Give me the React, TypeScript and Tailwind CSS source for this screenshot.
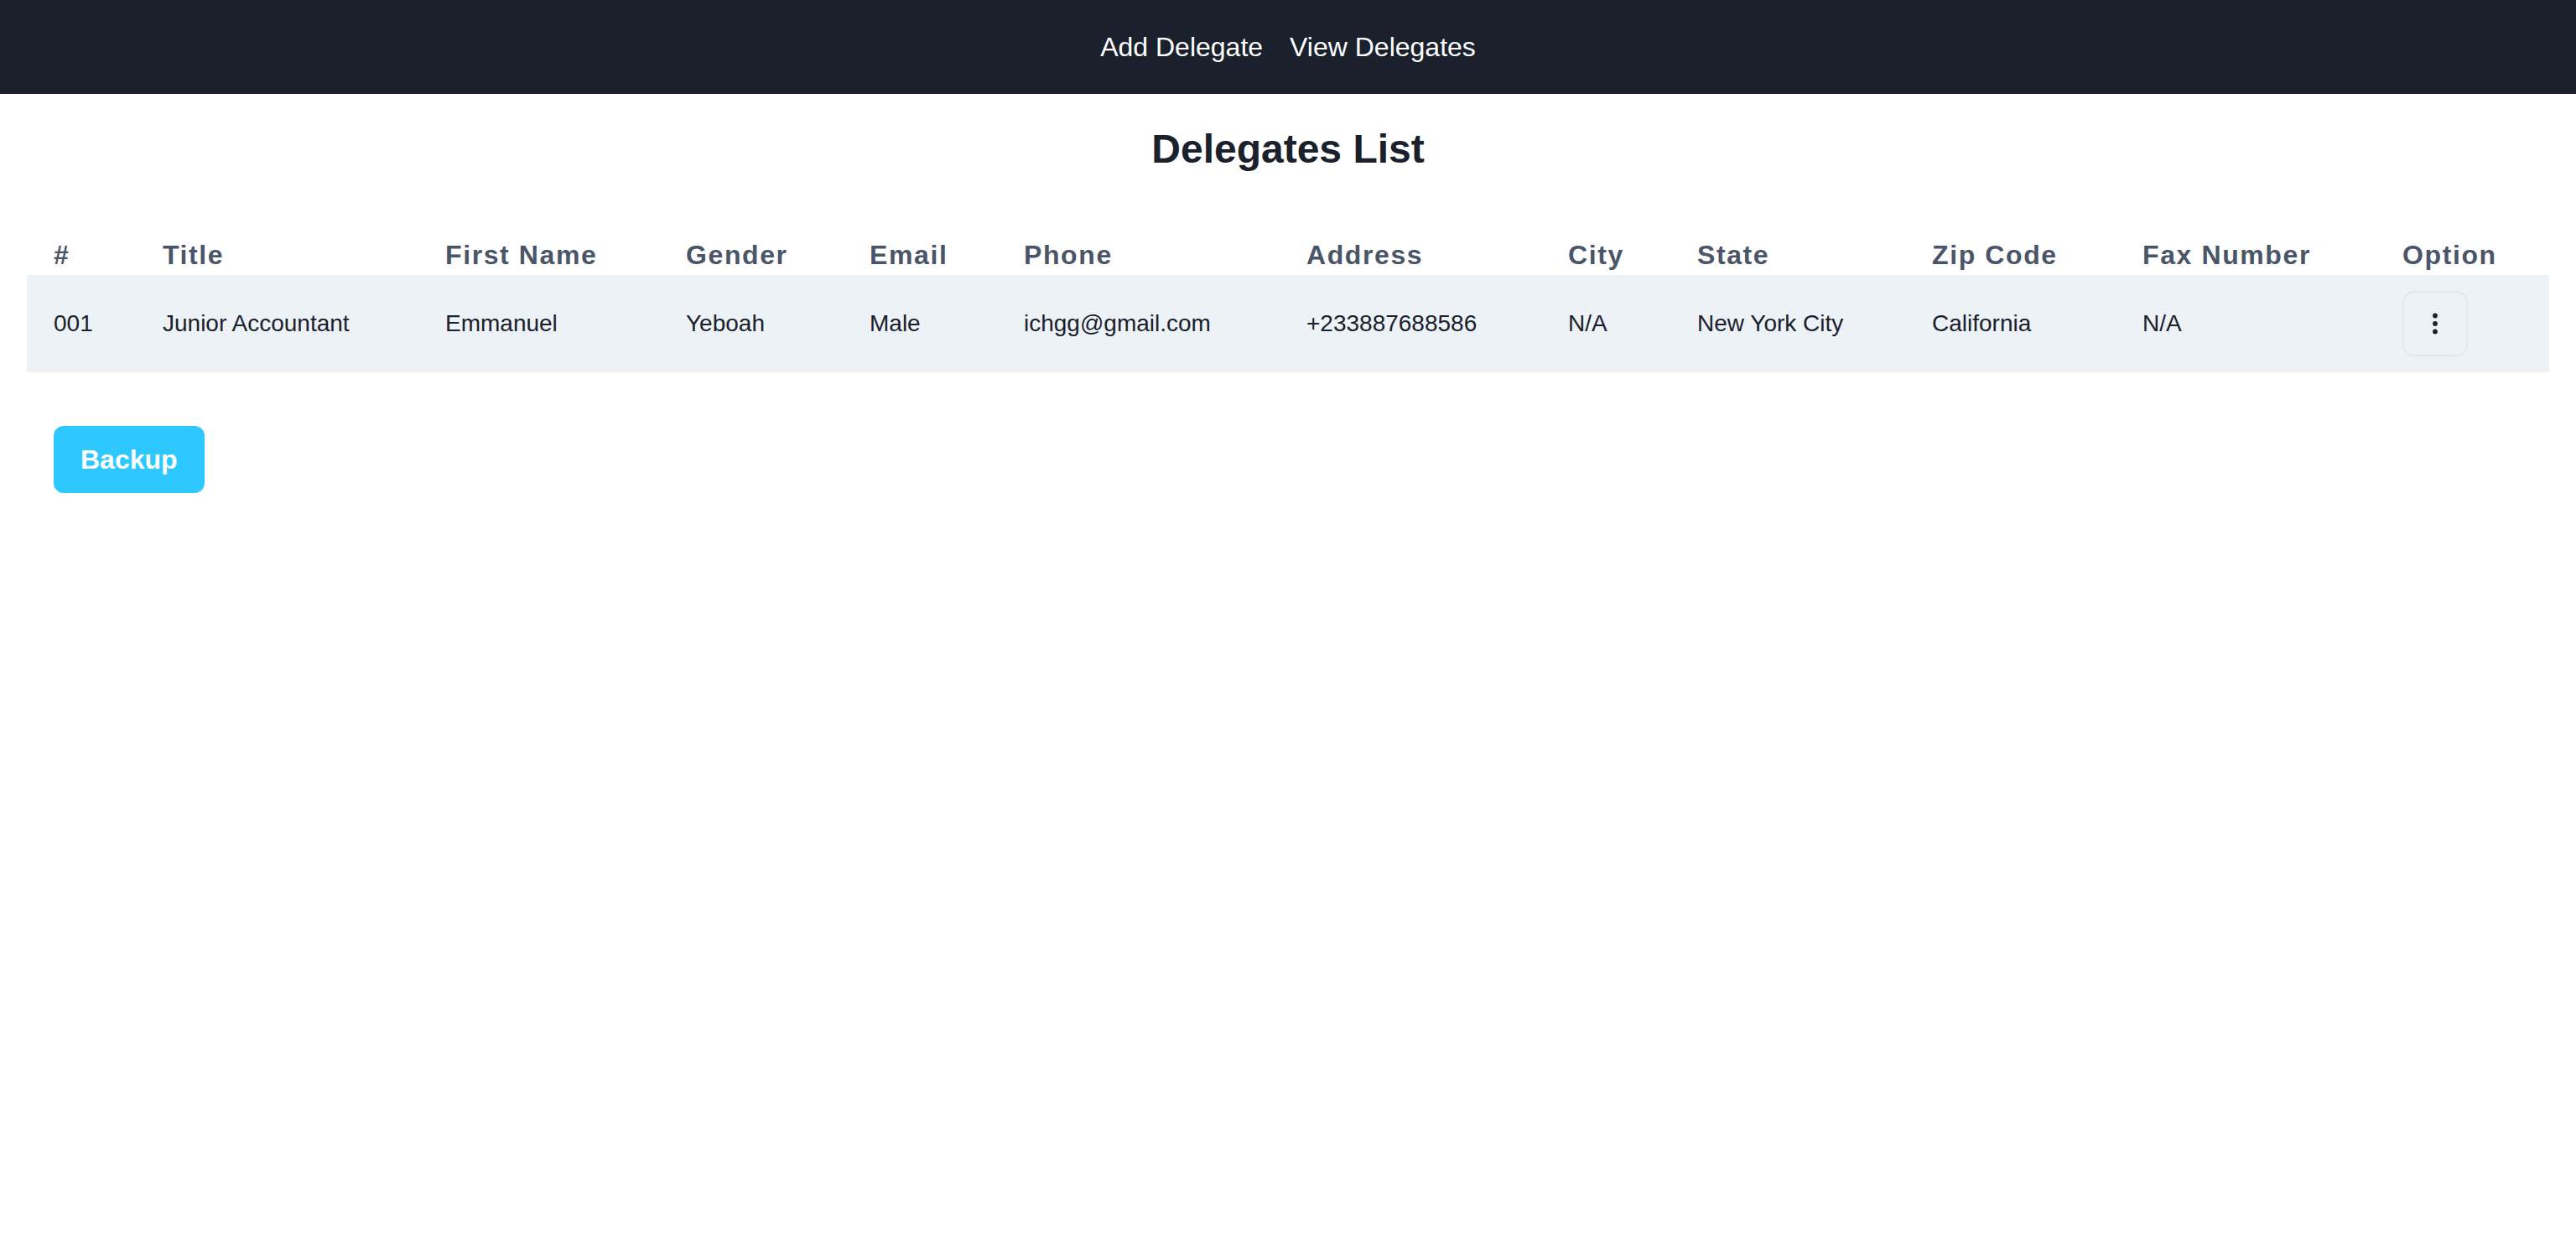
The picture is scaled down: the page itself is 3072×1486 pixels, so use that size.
import { useState } from 'react';

interface Delegate {
  id: string;
  title: string;
  firstName: string;
  lastName: string;
  gender: string;
  email: string;
  phone: string;
  address: string;
  city: string;
  state: string;
  zip: string;
}

// the table is rendered at twice the usual scale, so every size here is doubled
const columns = [
  { label: '#', width: 'w-[130px]' },
  { label: 'Title', width: 'w-[337px]' },
  { label: 'First Name', width: 'w-[287px]' },
  { label: 'Gender', width: 'w-[219px]' },
  { label: 'Email', width: 'w-[184px]' },
  { label: 'Phone', width: 'w-[337px]' },
  { label: 'Address', width: 'w-[312px]' },
  { label: 'City', width: 'w-[154px]' },
  { label: 'State', width: 'w-[280px]' },
  { label: 'Zip Code', width: 'w-[251px]' },
  { label: 'Fax Number', width: 'w-[310px]' },
  { label: 'Option', width: 'w-[207px]' },
];

const delegates: Delegate[] = [
  {
    id: '001',
    title: 'Junior Accountant',
    firstName: 'Emmanuel',
    lastName: 'Yeboah',
    gender: 'Male',
    email: 'ichgg@gmail.com',
    phone: '+233887688586',
    address: 'N/A',
    city: 'New York City',
    state: 'California',
    zip: 'N/A',
  },
];

const DotsIcon = () => (
  <svg width="8" height="28" viewBox="0 0 8 28" fill="#1a202c">
    <circle cx="4" cy="4.5" r="2.9" />
    <circle cx="4" cy="14" r="2.9" />
    <circle cx="4" cy="23.5" r="2.9" />
  </svg>
);

const App = () => {
  const [openRow, setOpenRow] = useState<string | null>(null);

  return (
    <div className="min-h-screen bg-white font-['Liberation_Sans',Arial,sans-serif] text-[#1a202c]">
      {/* Nav */}
      <nav className="bg-[#1a202c] py-8">
        <ul className="flex justify-center gap-8 text-[32px] leading-[48px] text-white">
          <li>
            <a href="#add">Add Delegate</a>
          </li>
          <li>
            <a href="#view">View Delegates</a>
          </li>
        </ul>
      </nav>

      <div className="px-8">
        <h1 className="mt-8 mb-[36px] text-center text-5xl leading-[68px] font-bold">Delegates List</h1>

        <table className="w-full table-fixed border-collapse text-left">
          <thead>
            <tr>
              {columns.map((col) => (
                <th
                  key={col.label}
                  className={`${col.width} px-8 pt-8 pb-0 text-[32px] leading-[48px] font-bold tracking-wider text-[#4a5568]`}
                >
                  {col.label}
                </th>
              ))}
            </tr>
          </thead>
          <tbody>
            {delegates.map((d) => (
              <tr key={d.id} className="bg-[#edf2f7] text-[28px] leading-[40px]">
                <td className="px-8 py-[19px]">{d.id}</td>
                <td className="px-8 py-[19px]">{d.title}</td>
                <td className="px-8 py-[19px]">{d.firstName}</td>
                <td className="px-8 py-[19px]">{d.lastName}</td>
                <td className="px-8 py-[19px]">{d.gender}</td>
                <td className="px-8 py-[19px]">{d.email}</td>
                <td className="px-8 py-[19px]">{d.phone}</td>
                <td className="px-8 py-[19px]">{d.address}</td>
                <td className="px-8 py-[19px]">{d.city}</td>
                <td className="px-8 py-[19px]">{d.state}</td>
                <td className="px-8 py-[19px]">{d.zip}</td>
                <td className="px-8 py-[19px]">
                  <button
                    onClick={() => setOpenRow(openRow === d.id ? null : d.id)}
                    className="flex h-[78px] w-[78px] items-center justify-center rounded-[14px] border-2 border-[#e2e8f0]"
                  >
                    <DotsIcon />
                  </button>
                </td>
              </tr>
            ))}
          </tbody>
        </table>

        <div className="mt-16 px-8">
          <button className="rounded-[12px] bg-[#2dc8ff] px-8 py-4 text-[32px] leading-[48px] font-bold text-white">
            Backup
          </button>
        </div>
      </div>
    </div>
  );
};

export default App;
